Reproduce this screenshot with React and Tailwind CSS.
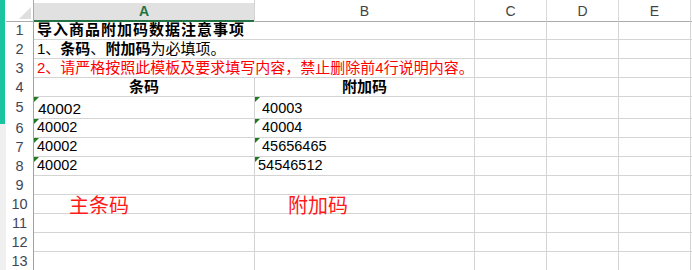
import React from 'react';

const FONT = "font-['Liberation_Sans','Noto_Sans_CJK_SC',sans-serif]";

const columns = [
  { key: 'A', active: true },
  { key: 'B' },
  { key: 'C' },
  { key: 'D' },
  { key: 'E' },
];

// rows 5-8: text-formatted numbers
const codeRows = [
  { n: 5, a: '40002', b: '\u00a040003', big: true },
  { n: 6, a: '40002', b: '\u00a040004' },
  { n: 7, a: '40002', b: '\u00a045656465' },
  { n: 8, a: '40002', b: '54546512' },
];

const Tri = () => (
  <span className="absolute top-0 left-0 w-0 h-0 border-t-[5px] border-r-[5px] border-t-[#1f7a1f] border-r-transparent" />
);

const RowNum = ({ n }) => (
  <div className="flex items-center justify-center border-r border-[#a3a3a3] text-[14.5px] text-[#3f4558] bg-white">
    {n}
  </div>
);

const Cell = ({ children, className = '' }) => (
  <div className={`relative flex items-center border-r border-b border-[#d4d4d4] px-[3px] whitespace-nowrap ${className}`}>
    {children}
  </div>
);

const Blank = () => <div className="border-r border-b border-[#d4d4d4]" />;

const Tail = () => <div className="border-b border-[#d4d4d4]" />;

export default function App() {
  return (
    <div className={`w-[692px] h-[270px] overflow-hidden flex bg-white ${FONT}`}>
      {/* side strip */}
      <div className="w-[6px] flex flex-col">
        <div className="w-[5px] h-[124px] bg-[#19c49f]" />
        <div className="flex-1 bg-[#f0f0f0]" />
      </div>

      <div className="relative flex-1 grid grid-cols-[28px_221px_220px_72px_72px_72px_1fr] grid-rows-[22px_18px_19px_19px_19px_22px_19px_19px_19px_19px_19px_19px_19px_19px]">
        {/* header row */}
        <div className="relative border-r border-b border-[#ababab]">
          <svg className="absolute right-[2px] bottom-[2px]" width="12" height="12" viewBox="0 0 12 12">
            <polygon points="12,0 12,12 0,12" fill="#dfdfdf" />
          </svg>
        </div>
        {columns.map(col =>
          col.active ? (
            <div key={col.key} className="pt-[3px] border-r border-[#d4d4d4]">
              <div className="h-full flex items-center justify-center bg-[#e1e1e1] border-b-2 border-[#217346] text-[14px] font-bold text-[#217346]">
                {col.key}
              </div>
            </div>
          ) : (
            <div key={col.key} className="pt-[2px] flex items-center justify-center border-r border-b border-r-[#dadada] border-b-[#ababab] text-[14px] text-[#444]">
              {col.key}
            </div>
          )
        )}
        <div className="border-b border-[#ababab]" />

        {/* row 1 */}
        <RowNum n={1} />
        <Cell className="col-span-2 text-[15px] font-bold tracking-[1px] text-black">导入商品附加码数据注意事项</Cell>
        <Blank /><Blank /><Blank /><Tail />

        {/* row 2 */}
        <RowNum n={2} />
        <Cell className="col-span-2 text-[15px] text-black">
          1、<b className="font-bold">条码</b>、<b className="font-bold">附加码</b>为必填项。
        </Cell>
        <Blank /><Blank /><Blank /><Tail />

        {/* row 3 */}
        <RowNum n={3} />
        <Cell className="col-span-2 text-[15px] text-[#ff0000]">
          2、请严格按照此模板及要求填写内容，禁止删除前4行说明内容。
        </Cell>
        <Blank /><Blank /><Blank /><Tail />

        {/* row 4 */}
        <RowNum n={4} />
        <Cell className="justify-center text-[15px] font-bold text-black">条码</Cell>
        <Cell className="justify-center text-[15px] font-bold text-black">附加码</Cell>
        <Blank /><Blank /><Blank /><Tail />

        {codeRows.map(r => (
          <React.Fragment key={r.n}>
            <RowNum n={r.n} />
            <Cell className={`${r.big ? 'text-[15.5px] pl-[4px] pt-[2px]' : 'text-[14.5px]'} text-black`}>
              <Tri />
              {r.a}
            </Cell>
            <Cell className={`text-[14.5px] text-black ${r.big ? 'pt-[2px]' : ''}`}>
              <Tri />
              {r.b}
            </Cell>
            <Blank /><Blank /><Blank /><Tail />
          </React.Fragment>
        ))}

        {[9, 10, 11, 12, 13].map(n => (
          <React.Fragment key={n}>
            <RowNum n={n} />
            <Blank /><Blank /><Blank /><Blank /><Blank /><Tail />
          </React.Fragment>
        ))}

        {/* floating text boxes */}
        <div className="absolute left-[63px] top-[196px] text-[20px] leading-none text-[#ff1a1a]">主条码</div>
        <div className="absolute left-[282px] top-[196px] text-[20px] leading-none text-[#ff1a1a]">附加码</div>
      </div>
    </div>
  );
}
